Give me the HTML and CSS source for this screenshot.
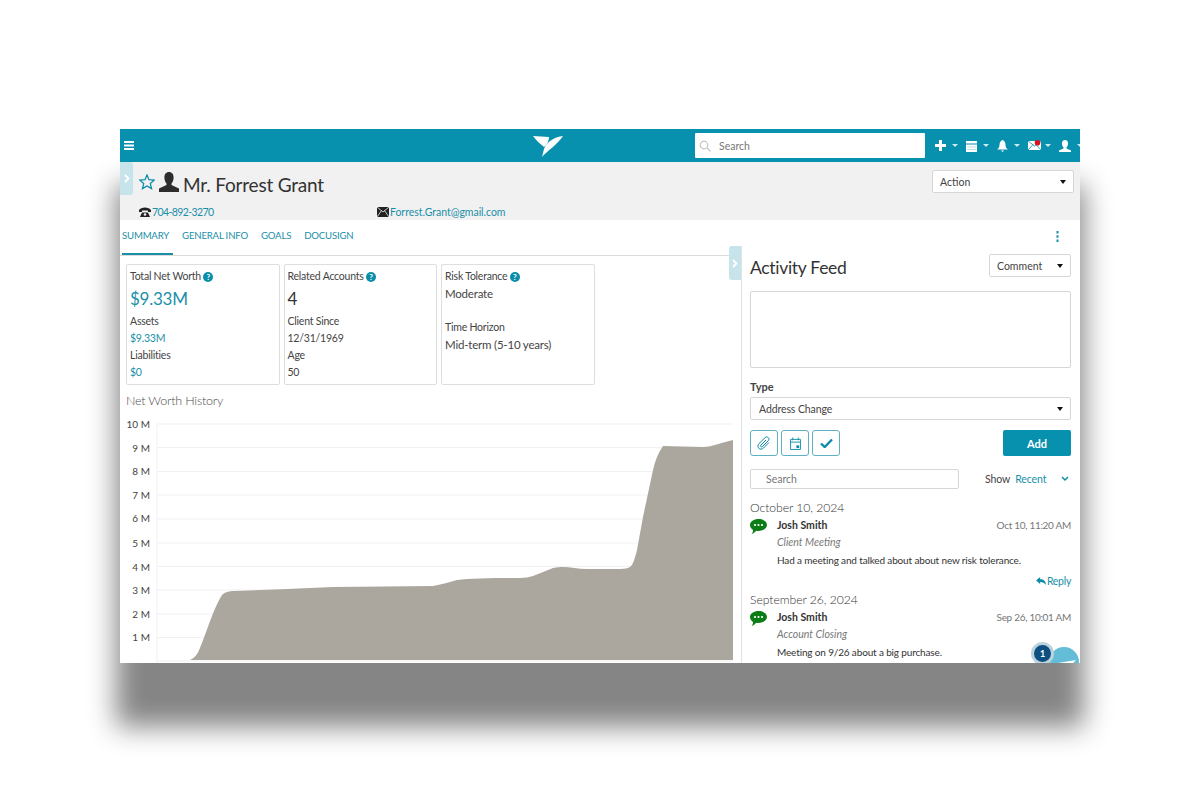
FILE: index.html
```html
<!DOCTYPE html>
<html lang="en">
<head>
<meta charset="utf-8">
<title>Mr. Forrest Grant</title>
<link rel="stylesheet" href="styles.css">
</head>
<body>
<div class="app">
  <header class="topbar">
    <svg class="burger" viewBox="0 0 10 9" width="10" height="9"><path d="M0 0h10v2H0zM0 3.500h10v2H0zM0 7h10v2H0z" fill="#fff"/></svg>
    <svg class="logo" viewBox="0 0 30 21" width="30" height="21"><path d="M0 0 L16 1 C16 5 14 9 11 11 C7 8 3 4 0 0Z" fill="#fff"/><path d="M30 0 C22 1 14 5 11 13 L9 21 C14 15 24 9 30 0Z" fill="#fff"/></svg>
    <div class="search">
      <svg viewBox="0 0 12 12" width="12" height="12"><circle cx="5" cy="5" r="3.800" fill="none" stroke="#c4c4c4" stroke-width="1.200"/><path d="M8 8l3.500 3.500" stroke="#c4c4c4" stroke-width="1.200"/></svg>
      <span>Search</span>
    </div>
    <nav class="tools">
      <span class="tool"><svg viewBox="0 0 11 11" width="11" height="11"><path d="M4 0h3v4h4v3H7v4H4V7H0V4h4z" fill="#fff"/></svg><i class="caret"></i></span>
      <span class="tool"><svg viewBox="0 0 11 12" width="11" height="12"><path d="M0 1h11v2.500H0zM0 4.500h11V12H0z" fill="#fff"/><path d="M1 7h9M1 9.500h9" stroke="#8fd0df" stroke-width=".6"/></svg><i class="caret"></i></span>
      <span class="tool"><svg viewBox="0 0 11 12" width="11" height="12"><path d="M5.500 0C7.500 1 8.500 2.500 8.500 5c0 2 1 3.500 2.500 4.500H0C1.500 8.500 2.500 7 2.500 5c0-2.500 1-4 3-5zM4 10.500h3L5.500 12z" fill="#fff"/></svg><i class="caret"></i></span>
      <span class="tool mail"><svg viewBox="0 0 14 11" width="14" height="11"><path d="M0 1h13v9H0z" fill="#fff"/><path d="M0 1l6.500 5L13 1M0 10l5-5.500M13 10L8 4.500" fill="none" stroke="#0891ae" stroke-width=".8"/><circle cx="9.500" cy="2.800" r="2.800" fill="#d8121f"/></svg><i class="caret"></i></span>
      <span class="tool"><svg viewBox="0 0 12 12" width="12" height="12"><path d="M6 0c2 0 3 1.500 3 3.500S8 7 7.500 7.500V8.500L12 10.500V12H0v-1.500L4.500 8.500V7.500C4 7 3 5.500 3 3.500S4 0 6 0z" fill="#fff"/></svg><i class="caret"></i></span>
    </nav>
  </header>

  <section class="client">
    <div class="client-main">
      <svg class="star" viewBox="0 0 16 16" width="16" height="16"><path d="M8 1l2 4.700 5.200.5-3.900 3.400 1.200 5L8 11.900 3.500 14.600l1.200-5L.8 6.200 6 5.700z" fill="none" stroke="#0b8ca8" stroke-width="1.300"/></svg>
      <svg class="person" viewBox="0 0 20 20" width="20" height="20"><path d="M10 0c3 0 4.600 2.300 4.600 5.500 0 2.700-1 4.700-2.100 6v1.400L20 16.500V20H0v-3.500l7.500-3.600v-1.400c-1.100-1.300-2.100-3.300-2.100-6C5.400 2.300 7 0 10 0z" fill="#2d2d2d"/></svg>
      <h1>Mr. Forrest Grant</h1>
      <div class="select action"><span>Action</span><i class="tri"></i></div>
    </div>
    <div class="contacts">
      <span class="contact phone"><svg viewBox="0 0 12 10" width="12" height="10"><path d="M0 3C2-.500 10-.500 12 3v2H9V3.500H3V5H0zM3 5.500h6l2 4.500H1z" fill="#222"/><circle cx="6" cy="7.500" r="1.300" fill="#f1f1f2"/></svg><a>704-892-3270</a></span>
      <span class="contact"><svg viewBox="0 0 12 10" width="12" height="10"><path d="M0 0h12v10H0z" fill="#222"/><path d="M0 0l6 5 6-5M0 10l4.500-6.500M12 10L7.500 3.500" fill="none" stroke="#f1f1f2" stroke-width=".8"/></svg><a>Forrest.Grant@gmail.com</a></span>
    </div>
  </section>

  <div class="workspace">
    <main class="left">
      <nav class="tabs">
        <a class="tab active">SUMMARY</a>
        <a class="tab">GENERAL INFO</a>
        <a class="tab">GOALS</a>
        <a class="tab">DOCUSIGN</a>
      </nav>
      <div class="cards">
        <article class="card">
          <p class="line">Total Net Worth <b class="help">?</b></p>
          <p class="big teal">$9.33M</p>
          <p class="line">Assets</p>
          <p class="line teal">$9.33M</p>
          <p class="line">Liabilities</p>
          <p class="line teal">$0</p>
        </article>
        <article class="card">
          <p class="line">Related Accounts <b class="help">?</b></p>
          <p class="big">4</p>
          <p class="line">Client Since</p>
          <p class="line">12/31/1969</p>
          <p class="line">Age</p>
          <p class="line">50</p>
        </article>
        <article class="card">
          <p class="line">Risk Tolerance <b class="help">?</b></p>
          <p class="line value">Moderate</p>
          <p class="line gap">Time Horizon</p>
          <p class="line value">Mid-term (5-10 years)</p>
        </article>
      </div>
      <h2 class="chart-title">Net Worth History</h2>
      <svg class="chart" viewBox="0 0 613 248" width="613" height="248">
        <g class="grid">
          <path d="M37 9H613M37 32.500H613M37 56.500H613M37 80H613M37 104H613M37 128H613M37 151.500H613M37 175H613M37 199H613M37 222.500H613M37 246H613"/>
          <path d="M37 9V248"/>
        </g>
        <g class="ticks">
          <text x="30" y="13">10 M</text>
          <text x="30" y="37">9 M</text>
          <text x="30" y="60">8 M</text>
          <text x="30" y="84">7 M</text>
          <text x="30" y="107">6 M</text>
          <text x="30" y="132">5 M</text>
          <text x="30" y="156">4 M</text>
          <text x="30" y="179">3 M</text>
          <text x="30" y="203">2 M</text>
          <text x="30" y="226">1 M</text>
          <text x="30" y="255">0</text>
        </g>
        <path class="area" d="M70 245C75 243 78 238 80 233C86 219 94 192 102 180C105 177 109 176 113 176L167 174L213 172L313 171C320 170 325 168 330 167L337 165C350 163 380 163 400 163C405 163 409 162 413 161L433 153C437 152 440 152 443 152C450 152 458 154 467 154L500 154C505 154 508 153 510 152C513 150 515 143 517 135L523 102L533 55C535 46 538 38 543 31L583 32C592 32 603 27 613 25V245Z"/>
      </svg>
    </main>

    <aside class="right">
      <div class="kebab-row"><svg viewBox="0 0 3 11" width="3" height="11"><path d="M.5 0h2v2.500h-2zM.5 4.200h2v2.500h-2zM.5 8.400h2v2.500h-2z" fill="#1a8fa8"/></svg></div>
      <div class="panel">
        <div class="panel-head">
          <h2>Activity Feed</h2>
          <div class="select comment"><span>Comment</span><i class="tri"></i></div>
        </div>
        <div class="textarea"></div>
        <label class="type-label">Type</label>
        <div class="select type"><span>Address Change</span><i class="tri"></i></div>
        <div class="actions">
          <span class="icon-btn"><svg viewBox="0 0 14 14" width="14" height="14"><path d="M12 6.500L6.500 12c-1.500 1.500-3.500 1.500-4.700.3S.6 9 2 7.600L8 1.700c1-1 2.400-1 3.300-.1s.9 2.200-.1 3.200L5.500 10.500c-.5.500-1.200.5-1.600.1s-.4-1.100.1-1.600L9 4" fill="none" stroke="#0b8ca8" stroke-width="1"/></svg></span>
          <span class="icon-btn"><svg viewBox="0 0 12 14" width="11" height="13"><path d="M.6 2.500h10.800v11H.6zM.6 5.500h10.800M3 .5v3M9 .5v3" fill="none" stroke="#0b8ca8" stroke-width="1"/><path d="M7 9h3v3H7z" fill="#0b8ca8"/></svg></span>
          <span class="icon-btn"><svg viewBox="0 0 13 10" width="13" height="10"><path d="M1 5.500L4.700 9 12 1.500" fill="none" stroke="#0b8ca8" stroke-width="2.400"/></svg></span>
          <button class="add">Add</button>
        </div>
        <div class="filter">
          <div class="feed-search">Search</div>
          <span class="show">Show</span>
          <a class="recent">Recent</a>
          <svg class="chev" viewBox="0 0 8 6" width="8" height="6"><path d="M1 1l3 3 3-3" fill="none" stroke="#0b8ca8" stroke-width="1.500"/></svg>
        </div>
        <h3 class="date">October 10, 2024</h3>
        <article class="entry">
          <svg class="bubble" viewBox="0 0 17 15" width="17" height="15"><path d="M8.500 0C13 0 17 2.500 17 6s-4 6-8.500 6c-.8 0-1.600-.1-2.300-.2C5 13.300 3.500 14.500 1.500 15c1-1 1.500-2.200 1.600-4C1.200 9.800 0 8 0 6c0-3.500 4-6 8.500-6z" fill="#0b7d16"/><circle cx="5" cy="6" r="1.100" fill="#fff"/><circle cx="8.500" cy="6" r="1.100" fill="#fff"/><circle cx="12" cy="6" r="1.100" fill="#fff"/></svg>
          <div class="entry-body">
            <div class="entry-top"><strong>Josh Smith</strong><time>Oct 10, 11:20 AM</time></div>
            <em>Client Meeting</em>
            <p>Had a meeting and talked about about new risk tolerance.</p>
          </div>
        </article>
        <div class="reply"><svg viewBox="0 0 11 9" width="10" height="8"><path d="M4.500 0v2.500C8.500 2.500 11 4.500 11 9 9.500 6.500 7.500 5.500 4.500 5.500V8L0 4z" fill="#0b8ca8"/></svg><a>Reply</a></div>
        <h3 class="date">September 26, 2024</h3>
        <article class="entry">
          <svg class="bubble" viewBox="0 0 17 15" width="17" height="15"><path d="M8.500 0C13 0 17 2.500 17 6s-4 6-8.500 6c-.8 0-1.600-.1-2.300-.2C5 13.300 3.500 14.500 1.500 15c1-1 1.500-2.200 1.600-4C1.200 9.800 0 8 0 6c0-3.500 4-6 8.500-6z" fill="#0b7d16"/><circle cx="5" cy="6" r="1.100" fill="#fff"/><circle cx="8.500" cy="6" r="1.100" fill="#fff"/><circle cx="12" cy="6" r="1.100" fill="#fff"/></svg>
          <div class="entry-body">
            <div class="entry-top"><strong>Josh Smith</strong><time>Sep 26, 10:01 AM</time></div>
            <em>Account Closing</em>
            <p>Meeting on 9/26 about a big purchase.</p>
          </div>
        </article>
      </div>
    </aside>
  </div>

  <span class="handle handle-left"><svg viewBox="0 0 6 9" width="6" height="9"><path d="M1 1l3.500 3.500L1 8" fill="none" stroke="#fff" stroke-width="1.800"/></svg></span>
  <span class="handle handle-right"><svg viewBox="0 0 6 9" width="6" height="9"><path d="M1 1l3.500 3.500L1 8" fill="none" stroke="#fff" stroke-width="1.800"/></svg></span>
  <div class="fab"><svg viewBox="0 0 20 12" width="20" height="12"><path d="M2 4l18-3-10 11z" fill="#fff"/></svg></div>
  <div class="badge">1</div>
</div>
</body>
</html>
```
FILE: styles.css
```css
* { box-sizing: border-box; }
html, body { margin: 0; height: 792px; overflow: hidden; background: #fff; }
body {
  padding: 129px 120px 0;
  font-family: "Lato", "Open Sans", "Liberation Sans", sans-serif;
  font-size: 10.5px;
  color: #333;
}
p, h1, h2, h3 { margin: 0; font-weight: 400; }
a { color: #1a8fa8; }

.app {
  position: relative;
  width: 960px;
  height: 534px;
  overflow: hidden;
  background: #fff;
  box-shadow: 0 60px 26px 4px #858585;
}

.topbar {
  display: flex;
  align-items: center;
  height: 33px;
  padding-left: 4px;
  background: #0891ae;
}
.burger { flex: none; }
.logo { flex: none; margin: 1px 0 0 399px; }
.search {
  display: flex;
  flex: none;
  align-items: center;
  gap: 8px;
  width: 230px;
  height: 25px;
  margin-left: 132px;
  padding-left: 4px;
  background: #fff;
  border-radius: 1px;
  color: #777;
  font-size: 10.5px;
}
.tools { display: flex; flex: none; align-items: center; margin-left: 10px; }
.tool { display: flex; align-items: center; flex: none; width: 31px; gap: 6px; }
.tool.mail { gap: 3px; }
.caret {
  width: 0;
  height: 0;
  border: 3px solid transparent;
  border-top-color: #cdeaf1;
  border-bottom-width: 0;
}

.client { height: 58px; background: #f1f1f2; }
.client-main { display: flex; align-items: center; height: 38px; padding: 0 6px 0 19px; }
.star { margin-top: 2px; }
.person { margin: 2px 4px 0; }
h1 { flex: 1; margin-top: 6px; font-size: 19px; letter-spacing: -.2px; color: #333; }
.select {
  display: flex;
  align-items: center;
  justify-content: space-between;
  background: #fff;
  border: 1px solid #d6d6d6;
  border-radius: 2px;
  color: #444;
  font-size: 10.5px;
}
.action { width: 142px; height: 23px; padding: 0 7px; margin-top: 1px; }
.tri {
  width: 0;
  height: 0;
  border: 3px solid transparent;
  border-top: 4px solid #111;
  border-bottom-width: 0;
}
.contacts { display: flex; align-items: center; height: 20px; padding: 4px 0 0 19px; }
.contact { display: flex; align-items: center; gap: 1px; font-size: 10.5px; letter-spacing: -.03px; }
.contact.phone { width: 238px; letter-spacing: -.6px; }

.workspace { display: grid; grid-template-columns: 621px 339px; height: 443px; overflow: hidden; }
.left { min-width: 0; }
.tabs {
  display: flex;
  gap: 13px;
  height: 36px;
  margin-right: 12px;
  padding-left: 2px;
  border-bottom: 1px solid #dcdcdc;
}
.tab { display: flex; align-items: center; height: 35px; padding-bottom: 4px; font-size: 9.6px; letter-spacing: -.18px; color: #1a8fa8; }
.tab.active { margin-right: -4px; padding-right: 4px; box-shadow: inset 0 -2px 0 #1a8fa8; }
.cards { display: flex; gap: 4px; padding: 8px 0 0 6px; }
.card {
  width: 153.5px;
  height: 121px;
  padding: 3px 3px 0;
  border: 1px solid #dedede;
  border-radius: 2px;
}
.line { height: 17px; line-height: 17px; font-size: 10.5px; letter-spacing: -.22px; color: #444; }
.big { height: 28px; line-height: 27px; font-size: 17px; letter-spacing: -.25px; color: #333; }
.big.teal { color: #1a8fa8; }
.line.teal { color: #1a8fa8; }
.line.value { font-size: 11.5px; letter-spacing: -.2px; }
.gap { margin-top: 17px; }
.help {
  display: inline-block;
  width: 10px;
  height: 10px;
  border-radius: 50%;
  background: #0b8ca8;
  color: #fff;
  font-size: 8px;
  letter-spacing: 0;
  line-height: 10px;
  text-align: center;
}
.chart-title { height: 17px; margin: 7px 0 0 6px; line-height: 17px; font-size: 12.5px; letter-spacing: -.2px; font-weight: 300; color: #4a4a4a; }
.chart { display: block; margin-top: 6px; overflow: hidden; }
.grid path { fill: none; stroke: #f1f1f1; stroke-width: 1; }
.ticks text { font-family: "Lato", sans-serif; font-size: 10px; fill: #444; text-anchor: end; }
.area { fill: #aca79e; }

.right { min-width: 0; }
.kebab-row { display: flex; justify-content: flex-end; align-items: center; height: 26px; padding: 6px 21px 0 0; }
.panel { height: 417px; padding: 8px 9px 0 8px; border-left: 1px solid #e2e2e2; overflow: hidden; }
.panel-head { display: flex; justify-content: space-between; align-items: center; height: 23px; }
.panel-head h2 { margin-top: 4px; font-size: 17.5px; letter-spacing: -.3px; color: #333; }
.comment { width: 82px; height: 23px; padding: 0 7px; }
.textarea { height: 77px; margin-top: 14px; border: 1px solid #d6d6d6; border-radius: 2px; }
.type-label { display: block; height: 14px; margin-top: 12px; line-height: 14px; font-size: 11px; font-weight: 700; color: #444; }
.type { height: 23px; margin-top: 3px; padding: 0 7px 0 8px; letter-spacing: -.1px; }
.actions { display: flex; align-items: stretch; gap: 3px; height: 26px; margin-top: 10px; }
.icon-btn {
  display: flex;
  align-items: center;
  justify-content: center;
  width: 28px;
  border: 1px solid #5fb0c2;
  border-radius: 3px;
}
.add {
  width: 68px;
  margin-left: auto;
  padding: 0;
  border: 0;
  border-radius: 2px;
  background: #0891ae;
  color: #fff;
  font: 700 11px "Lato", sans-serif;
}
.filter { display: flex; align-items: center; height: 21px; margin-top: 12px; }
.feed-search {
  width: 209px;
  height: 20px;
  padding-left: 15px;
  border: 1px solid #d6d6d6;
  border-radius: 2px;
  color: #777;
  line-height: 18px;
}
.show { margin-left: 26px; letter-spacing: -.1px; color: #444; }
.recent { flex: 1; margin-left: 5px; letter-spacing: -.1px; }
.chev { margin-right: 2px; }
.date { height: 18px; line-height: 18px; font-size: 12.2px; letter-spacing: -.05px; font-weight: 300; color: #333; }
.filter + .date { margin-top: 10px; }
.entry { display: flex; gap: 10px; }
.bubble { flex: none; margin-top: 2px; }
.entry-body { flex: 1; }
.entry-top { display: flex; justify-content: space-between; height: 16px; line-height: 16px; }
.entry-top strong { font-weight: 700; color: #333; }
.entry-top time { font-size: 10px; letter-spacing: -.3px; color: #777; }
.entry-body em { display: block; height: 18px; line-height: 18px; color: #777; }
.entry-body p { height: 19px; line-height: 19px; font-size: 10px; letter-spacing: -.15px; color: #333; }
.reply { display: flex; justify-content: flex-end; align-items: center; gap: 1px; height: 21px; font-size: 10.5px; letter-spacing: -.3px; }

.handle {
  position: absolute;
  display: flex;
  align-items: center;
  justify-content: center;
  background: #c7e4eb;
}
.handle-left { left: 0; top: 33px; width: 13px; height: 33px; border-radius: 0 3px 3px 0; }
.handle-right { left: 609px; top: 117px; width: 12px; height: 34px; border-radius: 3px 0 0 3px; }
.fab {
  position: absolute;
  left: 929px;
  top: 518px;
  width: 30px;
  height: 30px;
  padding: 12px 0 0 7px;
  border-radius: 50%;
  background: #63bdd6;
}
.badge {
  position: absolute;
  left: 911px;
  top: 513px;
  width: 23px;
  height: 23px;
  border: 3px solid #bcd2dd;
  border-radius: 50%;
  background: #0d4f80;
  color: #fff;
  font-size: 9px;
  font-weight: 700;
  line-height: 17px;
  text-align: center;
}
```
